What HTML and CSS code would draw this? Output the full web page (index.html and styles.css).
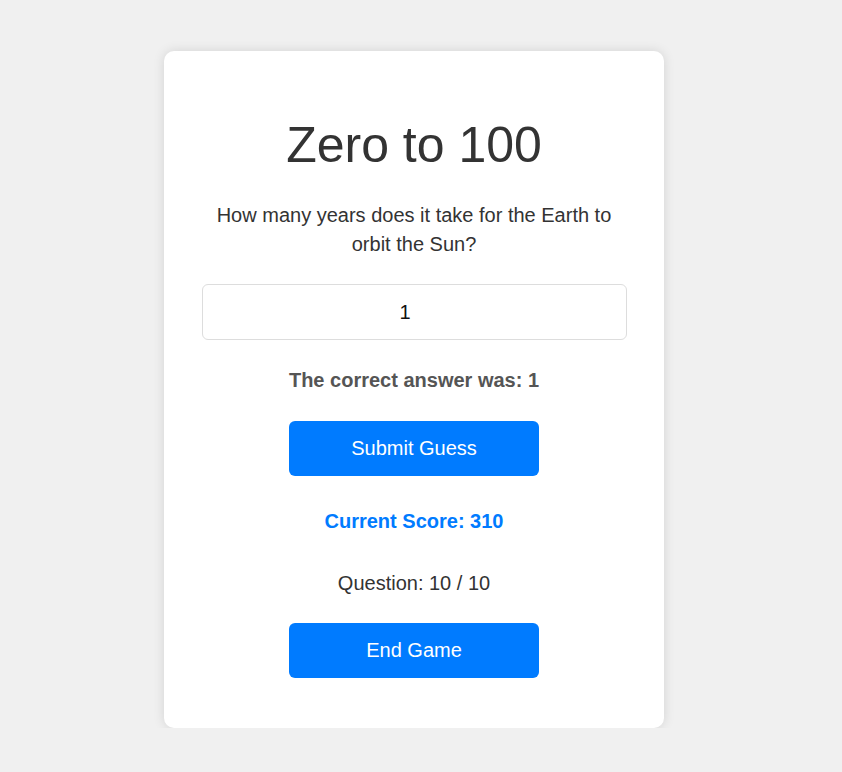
FILE: index.html
```html
<!DOCTYPE html>
<html lang="en">
<head>
<meta charset="utf-8">
<title>Zero to 100</title>
<link rel="stylesheet" href="styles.css">
</head>
<body>
<main class="page">
  <section class="card">
    <h1 class="title">Zero to 100</h1>
    <p class="question">How many years does it take for the Earth to orbit the Sun?</p>
    <input class="guess" type="number" value="1">
    <p class="feedback">The correct answer was: 1</p>
    <button class="btn btn-submit" type="button">Submit Guess</button>
    <p class="score">Current Score: 310</p>
    <p class="counter">Question: 10 / 10</p>
    <button class="btn btn-end" type="button">End Game</button>
  </section>
</main>
</body>
</html>
```

FILE: styles.css
```css
html, body {
  margin: 0;
  padding: 0;
  background: #f0f0f0;
  font-family: "Liberation Sans", Arial, sans-serif;
}

.page {
  display: flex;
  justify-content: center;
  padding: 51px 14px 0 0;
}

.card {
  box-sizing: border-box;
  width: 500px;
  background: #ffffff;
  border-radius: 10px;
  box-shadow: 0 0 12px rgba(0, 0, 0, 0.12);
  padding: 64px 37.5px 50px;
  display: flex;
  flex-direction: column;
  align-items: center;
  text-align: center;
}

.title {
  margin: 0;
  font-size: 50px;
  font-weight: normal;
  line-height: 60px;
  color: #333333;
}

.question {
  margin: 26px 0 0;
  font-size: 20px;
  line-height: 28.5px;
  color: #333333;
}

.guess {
  box-sizing: border-box;
  margin-top: 26px;
  width: 100%;
  height: 56px;
  padding: 0 18px 0 0;
  border: 1px solid #dddddd;
  border-radius: 6px;
  background: #ffffff;
  font-family: "Liberation Sans", Arial, sans-serif;
  font-size: 20px;
  color: #111111;
  text-align: center;
  outline: none;
  -moz-appearance: textfield;
}

.guess::-webkit-inner-spin-button,
.guess::-webkit-outer-spin-button {
  -webkit-appearance: none;
  margin: 0;
}

.feedback {
  margin: 28.6px 0 0;
  font-size: 20px;
  line-height: 23px;
  font-weight: bold;
  color: #555555;
}

.btn {
  box-sizing: border-box;
  width: 250px;
  height: 55px;
  border: none;
  border-radius: 6px;
  background: #007bff;
  color: #ffffff;
  font-family: "Liberation Sans", Arial, sans-serif;
  font-size: 20px;
  cursor: pointer;
}

.btn-submit {
  margin-top: 29.4px;
}

.score {
  margin: 33.6px 0 0;
  font-size: 20px;
  line-height: 23px;
  font-weight: bold;
  color: #007bff;
}

.counter {
  margin: 39px 0 0;
  font-size: 20px;
  line-height: 23px;
  color: #333333;
}

.btn-end {
  margin-top: 28.4px;
}
```
